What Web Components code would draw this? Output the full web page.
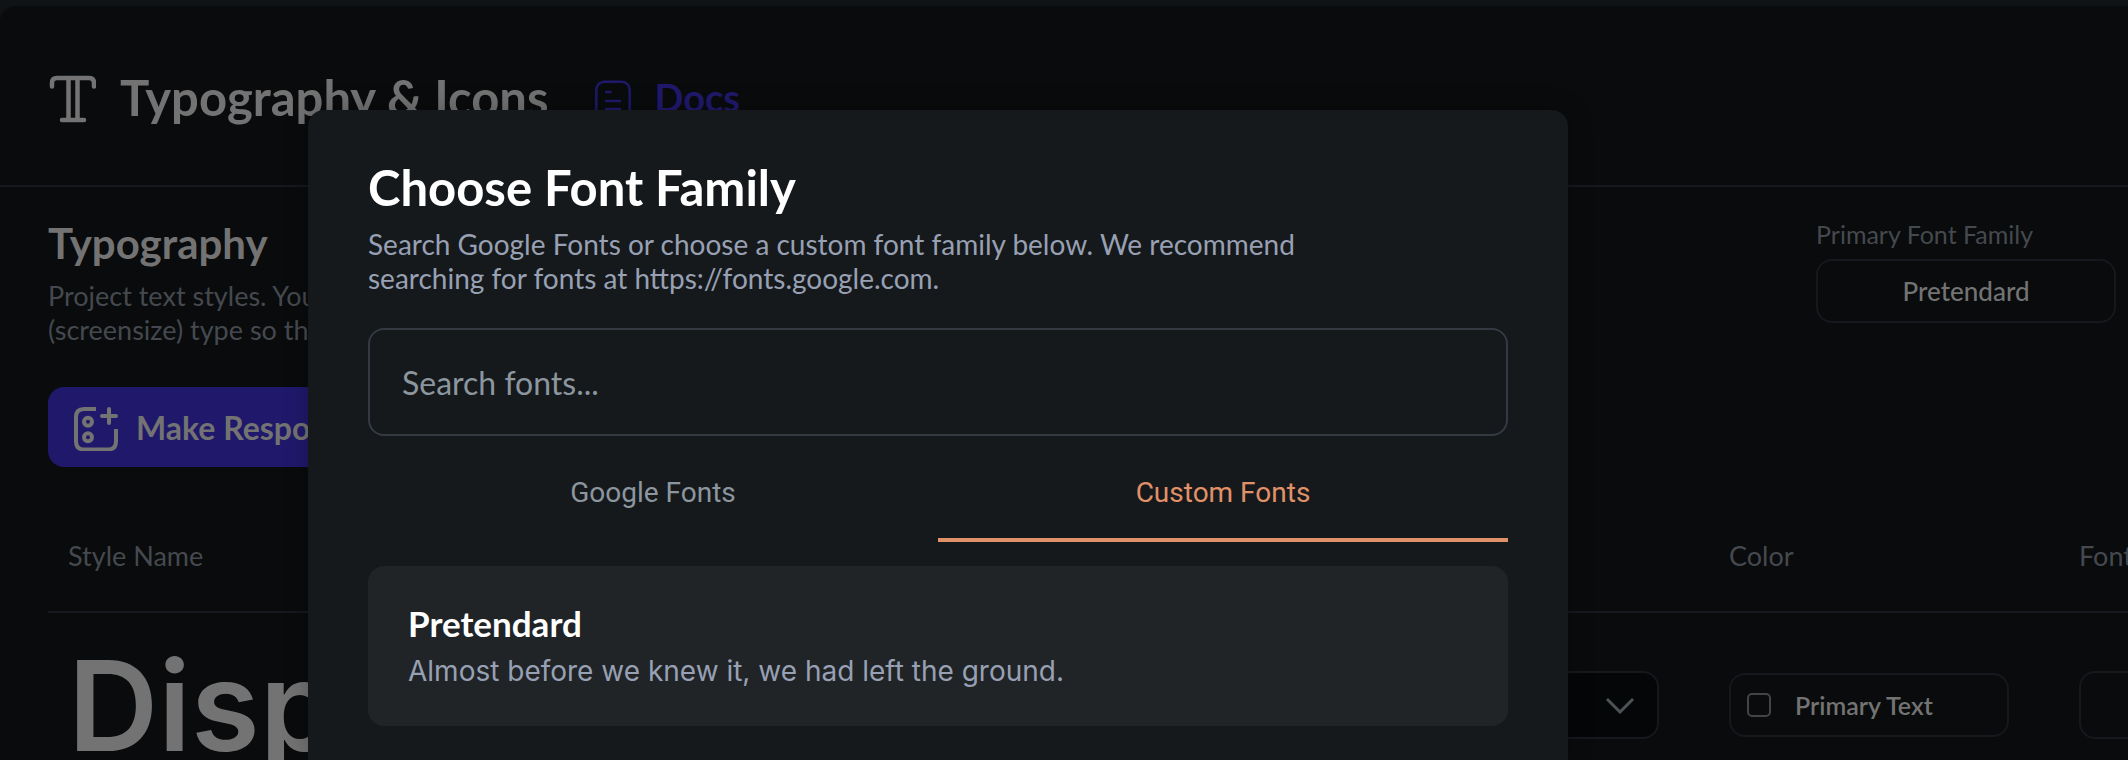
<!DOCTYPE html>
<html lang="en">
<head>
<meta charset="utf-8">
<title>Typography &amp; Icons</title>
<style>
  :root {
    --color-page: #090b0c;
    --color-strip: #101315;
    --color-line: #17181e;
    --color-ink: #737373;
    --color-muted: #45494f;
    --color-indigo: #20196b;
    --color-modal: #15191b;
    --color-card: #202427;
    --color-modal-muted: #98a0b4;
    --color-accent: #e09168;
    --radius: 16px;
    --font-ui: Lato, sans-serif;
  }

  body {
    margin: 0;
    block-size: 100vh;
    overflow: hidden;
    background: var(--color-strip);
    color: var(--color-ink);
    font-family: var(--font-ui);
    font-size: 27px;
  }
</style>
</head>
<body>
<studio-page>
  <studio-header slot="header">Typography &amp; Icons</studio-header>
  <type-intro></type-intro>
  <style-table></style-table>
</studio-page>

<font-modal>
  <font-option name="Pretendard">Almost before we knew it, we had left the ground.</font-option>
</font-modal>

<script>
class StudioPage extends HTMLElement {
    constructor() {
        super();
        this.attachShadow({ mode: 'open' });
    }

    connectedCallback() {
        this.shadowRoot.innerHTML = `
            <style>
              :host {
                display: block;
                box-sizing: border-box;
                block-size: 100vh;
                padding-block-start: 6px;
              }

              .surface {
                block-size: 100%;
                overflow: hidden;
                border-start-start-radius: var(--radius);
                background: var(--color-page);
              }
            </style>
            <div class="surface">
              <slot name="header"></slot>
              <main><slot></slot></main>
            </div>
        `;
    }
}

class StudioHeader extends HTMLElement {
    constructor() {
        super();
        this.attachShadow({ mode: 'open' });
    }

    connectedCallback() {
        this.shadowRoot.innerHTML = `
            <style>
              :host {
                display: block;
                border-block-end: 2px solid var(--color-line);
              }

              header {
                display: flex;
                align-items: center;
                gap: 24px;
                min-block-size: 179px;
                padding-inline: 48px;
              }

              svg {
                flex-shrink: 0;
                fill: none;
                stroke: currentColor;
                stroke-linecap: round;
                stroke-linejoin: round;
              }

              h1 {
                margin: 0;
                padding-block-start: 2px;
                font-size: 49px;
                font-weight: 700;
                line-height: 60px;
              }

              a {
                display: flex;
                align-items: center;
                gap: 18px;
                margin-inline-start: 16px;
                color: var(--color-indigo);
                font-size: 38px;
                font-weight: 700;
                line-height: 60px;
                text-decoration: none;
              }

              a span {
                padding-block-start: 2px;
              }
            </style>
            <header>
              <svg width="48" height="54" viewBox="0 0 48 54" stroke-width="4.500" aria-hidden="true">
                <path d="M4 17.500V14q0-5 5-5h32q5 0 5 5v3.500M20.500 9v42M29.500 9v42M14 51h22"/>
              </svg>
              <h1><slot></slot></h1>
              <a href="#docs">
                <svg width="48" height="48" viewBox="0 0 48 48" stroke-width="2.500" aria-hidden="true">
                  <rect x="7.300" y="9.800" width="33.400" height="36" rx="8"/>
                  <path d="M17 20h4.500M17 29h14M17 37h14"/>
                </svg>
                <span>Docs</span>
              </a>
            </header>
        `;
    }
}

class TypeIntro extends HTMLElement {
    constructor() {
        super();
        this.attachShadow({ mode: 'open' });
    }

    connectedCallback() {
        this.shadowRoot.innerHTML = `
            <style>
              :host {
                display: flex;
                justify-content: space-between;
                align-items: flex-start;
                padding: 32px 12px 32px 48px;
              }

              h2 {
                margin: 0;
                font-size: 42px;
                font-weight: 700;
                line-height: 48px;
              }

              p {
                margin: 12px 0 40px;
                color: var(--color-muted);
                line-height: 34px;
              }

              button {
                box-sizing: border-box;
                font-family: inherit;
                color: inherit;
                border-radius: var(--radius);
              }

              .primary {
                display: flex;
                align-items: center;
                gap: 16px;
                block-size: 80px;
                padding: 0 24px;
                border: 0;
                background: var(--color-indigo);
                font-size: 32px;
                font-weight: 700;
              }

              .primary svg {
                fill: none;
                stroke: currentColor;
                stroke-width: 4;
              }

              .field {
                display: flex;
                flex-direction: column;
                gap: 10px;
                inline-size: 300px;
                font-size: 25px;
              }

              .field label {
                color: var(--color-muted);
                line-height: 30px;
              }

              .field button {
                block-size: 64px;
                border: 2px solid var(--color-line);
                background: none;
                font-size: 26px;
                font-weight: 500;
              }
            </style>
            <section>
              <h2>Typography</h2>
              <p>Project text styles. You can set<br>(screensize) type so that</p>
              <button class="primary" type="button">
                <svg width="48" height="48" viewBox="0 0 48 48" aria-hidden="true">
                  <path d="M24 6H12q-8 0-8 8v24.500q0 8 8 8h24q8 0 8-8V26"/>
                  <path stroke-linecap="round" d="M37 6v14M30 13h14"/>
                  <circle cx="16" cy="18.700" r="4"/>
                  <circle cx="16" cy="34.300" r="4"/>
                </svg>
                Make Responsive
              </button>
            </section>
            <div class="field">
              <label for="family">Primary Font Family</label>
              <button id="family" type="button">Pretendard</button>
            </div>
        `;
    }
}

class StyleTable extends HTMLElement {
    constructor() {
        super();
        this.attachShadow({ mode: 'open' });
    }

    connectedCallback() {
        this.shadowRoot.innerHTML = `
            <style>
              :host {
                display: block;
                margin-inline-start: 48px;
              }

              /* The last column runs past the right edge of the window. */
              table {
                inline-size: calc(100% + 281px);
                border-spacing: 0;
                table-layout: fixed;
              }

              th,
              td {
                box-sizing: border-box;
                padding: 0 20px;
                text-align: start;
              }

              th {
                block-size: 114px;
                border-block-end: 2px solid var(--color-line);
                color: var(--color-muted);
                font-weight: 400;
              }

              td {
                block-size: 184px;
              }

              .family,
              .color,
              .size {
                inline-size: 350px;
              }

              .family {
                inline-size: 370px;
                padding-inline-end: 50px;
              }

              .sample {
                font: 600 125px/1 Inter, sans-serif;
                white-space: nowrap;
              }

              .select {
                display: grid;
                align-items: center;
              }

              .select > * {
                grid-area: 1 / 1;
              }

              select,
              input[type="text"] {
                box-sizing: border-box;
                inline-size: 100%;
                block-size: 68px;
                border: 2px solid var(--color-line);
                border-radius: var(--radius);
                appearance: none;
                background: #050607;
                color: inherit;
              }

              input[type="text"] {
                display: block;
                background: none;
              }

              .select svg {
                justify-self: end;
                margin-inline-end: 24px;
                fill: none;
                stroke: #4c5356;
                stroke-width: 3;
                pointer-events: none;
              }

              .swatch {
                display: flex;
                align-items: center;
                gap: 24px;
                box-sizing: border-box;
                inline-size: 280px;
                block-size: 64px;
                padding: 0 16px;
                border: 2px solid var(--color-line);
                border-radius: var(--radius);
                font-size: 25px;
                font-weight: 600;
              }

              .swatch input {
                box-sizing: border-box;
                inline-size: 24px;
                block-size: 24px;
                margin: 0;
                border: 2px solid #434445;
                border-radius: 5px;
                appearance: none;
              }
            </style>
            <table>
              <thead>
                <tr>
                  <th scope="col">Style Name</th>
                  <th class="family"></th>
                  <th class="color" scope="col">Color</th>
                  <th class="size" scope="col">Font</th>
                </tr>
              </thead>
              <tbody>
                <tr>
                  <td class="sample">Display</td>
                  <td class="family">
                    <div class="select">
                      <select aria-label="Font family"></select>
                      <svg width="30" height="18" viewBox="0 0 30 18"><path d="M2 3l13 13L28 3"/></svg>
                    </div>
                  </td>
                  <td class="color">
                    <label class="swatch"><input type="checkbox">Primary Text</label>
                  </td>
                  <td class="size"><input type="text" aria-label="Font size"></td>
                </tr>
              </tbody>
            </table>
        `;
    }
}

class FontModal extends HTMLElement {
    constructor() {
        super();
        this.attachShadow({ mode: 'open' });
    }

    connectedCallback() {
        this.shadowRoot.innerHTML = `
            <style>
              :host {
                position: absolute;
                inset: 110px 560px 0 308px;
                box-sizing: border-box;
                overflow: hidden;
                padding: 46px 60px 0;
                border-radius: var(--radius) var(--radius) 0 0;
                background: var(--color-modal);
                box-shadow: 0 0 24px rgb(0 0 0 / 25%);
                color: #fff;
              }

              h2 {
                margin: 0;
                font-size: 49px;
                font-weight: 700;
                line-height: 62px;
              }

              p {
                max-inline-size: 960px;
                margin: 9px 0 33px;
                color: var(--color-modal-muted);
                font-size: 28px;
                line-height: 34px;
              }

              input {
                display: block;
                box-sizing: border-box;
                inline-size: 100%;
                block-size: 108px;
                padding: 0 32px;
                border: 2px solid #343942;
                border-radius: var(--radius);
                background: none;
                color: inherit;
                font: inherit;
                font-size: 32px;
              }

              input::placeholder {
                color: #8c969f;
                opacity: 1;
              }

              .tabs {
                display: grid;
                grid-template-columns: 1fr 1fr;
                margin-block: 10px 24px;
              }

              .tabs button {
                block-size: 96px;
                padding: 0;
                border: 0;
                border-block-end: 4px solid transparent;
                background: none;
                color: #8c969f;
                font: 28px Roboto, sans-serif;
              }

              .tabs button[aria-selected="true"] {
                border-color: var(--color-accent);
                color: var(--color-accent);
              }
            </style>
            <h2>Choose Font Family</h2>
            <p>Search Google Fonts or choose a custom font family below. We recommend searching for fonts at https://fonts.google.com.</p>
            <input type="text" placeholder="Search fonts..." aria-label="Search fonts">
            <div class="tabs" role="tablist">
              <button type="button" role="tab" aria-selected="false">Google Fonts</button>
              <button type="button" role="tab" aria-selected="true">Custom Fonts</button>
            </div>
            <slot></slot>
        `;
    }
}

class FontOption extends HTMLElement {
    constructor() {
        super();
        this.attachShadow({ mode: 'open' });
    }

    connectedCallback() {
        this.shadowRoot.innerHTML = `
            <style>
              :host {
                display: block;
              }

              button {
                display: block;
                box-sizing: border-box;
                inline-size: 100%;
                padding: 35px 40px 29px;
                border: 0;
                border-radius: var(--radius);
                background: var(--color-card);
                text-align: start;
              }

              .name,
              .sample {
                display: block;
              }

              .name {
                color: #fff;
                font: 700 35px/44px var(--font-ui);
              }

              .sample {
                color: var(--color-modal-muted);
                font: 28px/52px Inter, sans-serif;
              }
            </style>
            <button type="button">
              <span class="name"></span>
              <span class="sample"><slot></slot></span>
            </button>
        `;
        this.shadowRoot.querySelector('.name').textContent = this.getAttribute('name') || '';
    }
}

customElements.define('studio-page', StudioPage);
customElements.define('studio-header', StudioHeader);
customElements.define('type-intro', TypeIntro);
customElements.define('style-table', StyleTable);
customElements.define('font-modal', FontModal);
customElements.define('font-option', FontOption);
</script>
</body>
</html>
